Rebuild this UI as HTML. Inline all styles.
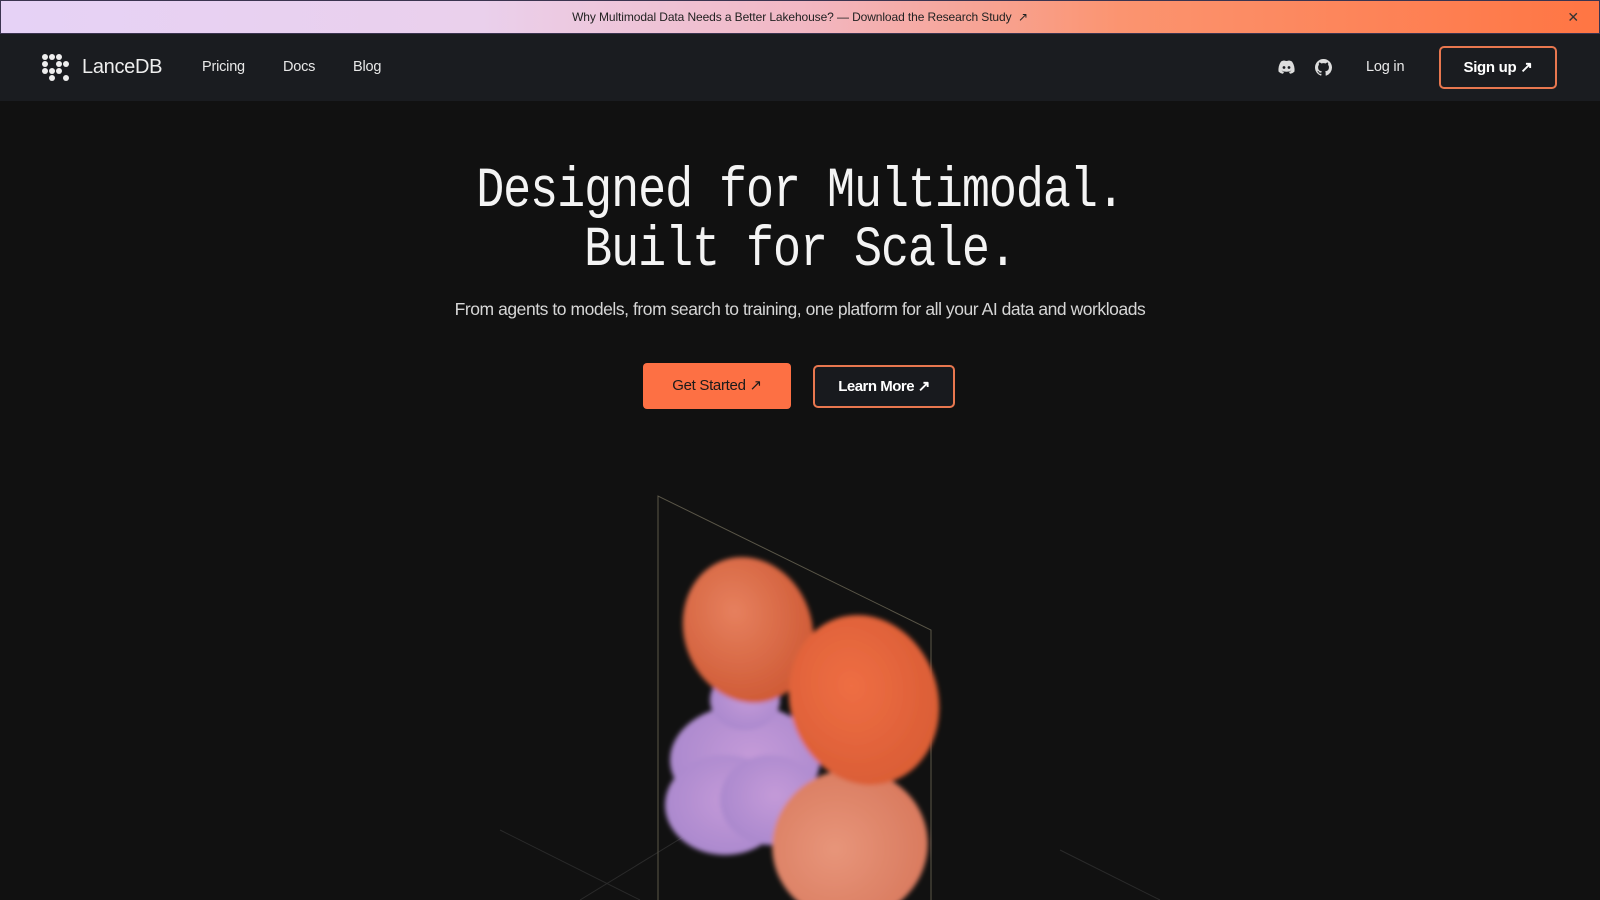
<!DOCTYPE html>
<html><head><meta charset="utf-8"><style>
*{margin:0;padding:0;box-sizing:border-box}
body{width:1600px;height:900px;overflow:hidden;background:#111111;font-family:"Liberation Sans",sans-serif;position:relative;color:#fff}
.banner{position:absolute;left:0;top:0;width:1600px;height:34px;background:linear-gradient(90deg,#e6d2f6 0%,#ead0ec 30%,#f2b8c4 50%,#fb9470 70%,#ff7543 100%);border:1px solid #3b3450;color:#222;font-size:12px;text-align:center;line-height:33px;letter-spacing:-0.1px}
.banner .x{position:absolute;right:20px;top:0;font-size:14px;color:#333}
.nav{position:absolute;left:0;top:34px;width:1600px;height:67px;background:#1a1c20}
.nav a{position:absolute;color:#e8e8e8;font-size:14.5px;top:25px;letter-spacing:-0.2px}
.logo{position:absolute;left:41px;top:19px}
.brand{position:absolute;left:82px;top:22px;font-size:20px;color:#eee;letter-spacing:-0.3px}
.signup{position:absolute;left:1439px;top:12px;width:118px;height:43px;border:2px solid #e8774f;border-radius:5px;color:#fff;font-size:15px;font-weight:bold;text-align:center;line-height:39px;letter-spacing:-0.3px}
h1{position:absolute;left:0;width:1600px;top:163px;text-align:center;font-family:"Liberation Mono",monospace;font-weight:normal;font-size:57px;letter-spacing:-1.3px;line-height:59px;color:#f4f4f4;transform:scaleX(0.82);transform-origin:800px 0}
.sub{position:absolute;left:0;width:1600px;top:299px;text-align:center;font-size:17.5px;color:#d6d6d6;letter-spacing:-0.45px}
.b1{position:absolute;left:643px;top:363px;width:148px;height:46px;background:#fd7044;border-radius:4px;color:#1a1a1a;font-size:15px;text-align:center;line-height:46px;letter-spacing:-0.3px}
.b2{position:absolute;left:813px;top:365px;width:142px;height:43px;background:#181a1e;border:2px solid #e8774f;border-radius:5px;color:#fff;font-size:15px;font-weight:bold;text-align:center;line-height:39px;letter-spacing:-0.5px}
</style></head><body>
<div class="banner">Why Multimodal Data Needs a Better Lakehouse? — Download the Research Study &nbsp;↗<span class="x">✕</span></div>
<div class="nav">
<svg class="logo" width="30" height="30" viewBox="0 0 30 30" fill="#eee"><circle cx="4" cy="4" r="3"/><circle cx="11" cy="4" r="3"/><circle cx="18" cy="4" r="3"/><circle cx="4" cy="11" r="3"/><circle cx="18" cy="11" r="3"/><circle cx="25" cy="11" r="3"/><circle cx="4" cy="18" r="3"/><circle cx="11" cy="18" r="3"/><circle cx="18" cy="18" r="3"/><circle cx="11" cy="25" r="3"/><circle cx="25" cy="25" r="3"/></svg>
<div class="brand">LanceDB</div>
<a style="left:202px">Pricing</a><a style="left:283px">Docs</a><a style="left:353px">Blog</a>
<svg style="position:absolute;left:1278px;top:26px" width="17" height="14" viewBox="0 0 17 14" fill="#ddd"><path d="M3 1.5Q6 0 7 0.8L8.5 1 10 0.8Q11 0 14 1.5 17 6 16.5 11.5 14.5 13.5 12 13.8L11 12Q13 11.3 13.5 10.5 8.5 13 3.5 10.5 4 11.3 6 12L5 13.8Q2.5 13.5 0.5 11.5 0 6 3 1.5Z"/><circle cx="6" cy="7.5" r="1.4" fill="#1a1c20"/><circle cx="11" cy="7.5" r="1.4" fill="#1a1c20"/></svg>
<svg style="position:absolute;left:1315px;top:25px" width="17" height="17" viewBox="0 0 16 16" fill="#ddd"><path d="M8 0C3.58 0 0 3.58 0 8c0 3.54 2.29 6.53 5.47 7.59.4.07.55-.17.55-.38v-1.33c-2.23.48-2.7-1.07-2.7-1.07-.36-.92-.89-1.17-.89-1.17-.73-.5.05-.49.05-.49.8.06 1.23.83 1.23.83.72 1.23 1.87.87 2.33.67.07-.52.28-.87.51-1.07-1.78-.2-3.64-.89-3.64-3.95 0-.87.31-1.59.82-2.15-.08-.2-.36-1.02.08-2.12 0 0 .67-.21 2.2.82.64-.18 1.32-.27 2-.27.68 0 1.36.09 2 .27 1.53-1.04 2.2-.82 2.2-.82.44 1.1.16 1.92.08 2.12.51.56.82 1.27.82 2.15 0 3.07-1.87 3.75-3.65 3.95.29.25.54.73.54 1.48v2.2c0 .21.15.46.55.38A8.01 8.01 0 0016 8c0-4.42-3.58-8-8-8z"/></svg>
<a style="left:1366px">Log in</a>
<div class="signup">Sign up ↗</div>
</div>
<h1>Designed for Multimodal.<br>Built for Scale.</h1>
<div class="sub">From agents to models, from search to training, one platform for all your AI data and workloads</div>
<div class="b1">Get Started ↗</div>
<div class="b2">Learn More ↗</div>
<svg style="position:absolute;left:0;top:440px" width="1600" height="460" viewBox="0 440 1600 460">
<defs>
<filter id="bl"><feGaussianBlur stdDeviation="2.5"/></filter>
<radialGradient id="o1" cx="45%" cy="35%" r="65%"><stop offset="0" stop-color="#e6805e"/><stop offset="1" stop-color="#cf5a35"/></radialGradient>
<radialGradient id="o2" cx="45%" cy="40%" r="65%"><stop offset="0" stop-color="#ee6e44"/><stop offset="1" stop-color="#d95c34"/></radialGradient>
<radialGradient id="p" cx="55%" cy="45%" r="65%"><stop offset="0" stop-color="#c49ad8"/><stop offset="1" stop-color="#a786cc"/></radialGradient>
<radialGradient id="pe" cx="40%" cy="50%" r="65%"><stop offset="0" stop-color="#e7957a"/><stop offset="1" stop-color="#d8785c"/></radialGradient>
</defs>
<g stroke="#2a2a2a" stroke-width="1" fill="none"><path d="M500 830L640 900M1160 900L1060 850M580 900L760 790"/></g>
<g stroke="#5a5648" stroke-width="1" fill="none"><path d="M658 900V496L931 630V900"/></g>
<g filter="url(#bl)">
<ellipse cx="745" cy="760" rx="75" ry="55" fill="url(#p)"/>
<ellipse cx="725" cy="805" rx="60" ry="50" fill="url(#p)"/>
<ellipse cx="770" cy="800" rx="50" ry="45" fill="url(#p)"/>
<ellipse cx="745" cy="700" rx="35" ry="30" fill="url(#p)"/>
<ellipse cx="748" cy="630" rx="64" ry="74" fill="url(#o1)" transform="rotate(-20 748 630)"/>
<ellipse cx="850" cy="845" rx="78" ry="75" fill="url(#pe)" transform="rotate(-15 850 845)"/>
<ellipse cx="864" cy="700" rx="74" ry="86" fill="url(#o2)" transform="rotate(-18 864 700)"/>
</g>
</svg>
</body></html>
